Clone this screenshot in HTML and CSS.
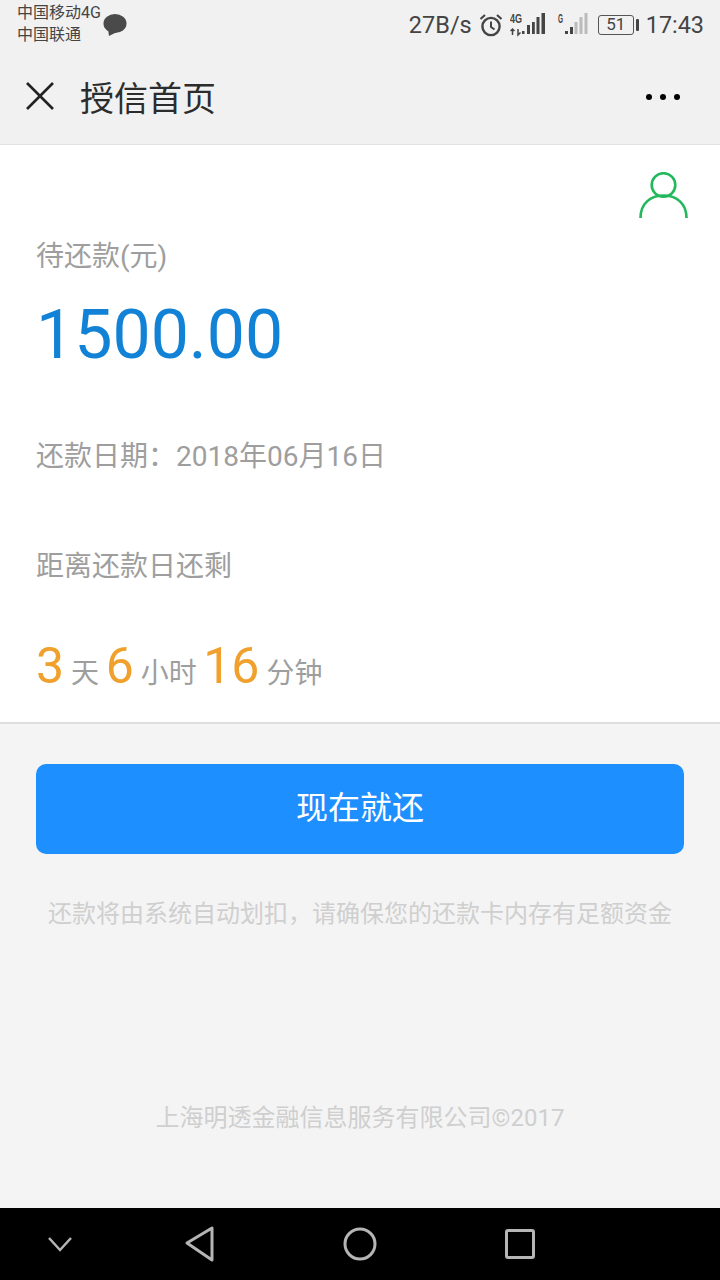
FILE: index.html
```html
<!DOCTYPE html>
<html lang="zh-CN">
<head>
<meta charset="utf-8">
<title>授信首页</title>
<link rel="stylesheet" href="styles.css">
</head>
<body>
<div class="phone">
  <div class="status">
    <div class="carriers">
      <div>中国移动4G</div>
      <div>中国联通</div>
    </div>
    <svg class="chat" width="26" height="24" viewBox="0 0 26 24"><ellipse cx="13" cy="10.5" rx="11.5" ry="9.5" fill="#4a4a4a"/><path d="M6 16 L7 23 L15 19Z" fill="#4a4a4a"/></svg>
    <div class="status-right">
      <span class="speed">27B/s</span>
      <svg width="24" height="24" viewBox="0 0 24 24" fill="none" stroke="#444" stroke-width="2.4"><circle cx="12" cy="13.500" r="8.600"/><path d="M12 8.500V14l3.500 2.500" stroke-width="2"/><path d="M1.500 6 L6 2M22.500 6 L18 2" stroke-width="2.200"/></svg>
      <svg class="sig1" width="36" height="24" viewBox="0 0 36 24"><text x="0" y="10" class="mini" textLength="12" lengthAdjust="spacingAndGlyphs">4G</text><path d="M2.500 16v6M0.500 18l2-2 2 2M8 16v6l2.500-2.500" stroke="#444" stroke-width="1.500" fill="none"/><g fill="#444"><rect x="12" y="18" width="2.500" height="3"/><rect x="17" y="12" width="3" height="9"/><rect x="22" y="9" width="2.800" height="12"/><rect x="26.500" y="4" width="3" height="17"/><rect x="31.500" y="0" width="3.500" height="21"/></g></svg>
      <svg class="sig2" width="32" height="24" viewBox="0 0 32 24"><text x="1" y="10" class="mini" textLength="5" lengthAdjust="spacingAndGlyphs">G</text><rect x="8" y="18" width="3" height="3" fill="#444"/><rect x="13" y="14" width="3" height="7" fill="#444"/><g fill="#bbb"><rect x="17.500" y="9" width="3" height="12"/><rect x="22.500" y="4" width="3" height="17"/><rect x="27.500" y="0" width="3" height="21"/></g></svg>
      <div class="battery"><span class="batt-body">51</span><span class="batt-tip"></span></div>
      <span class="clock">17:43</span>
    </div>
  </div>
  <header class="nav">
    <svg class="close" width="30" height="30" viewBox="0 0 30 30"><path d="M2 2 L28 28 M28 2 L2 28" stroke="#222" stroke-width="2.600" fill="none"/></svg>
    <h1 class="title">授信首页</h1>
    <div class="dots"><i></i><i></i><i></i></div>
  </header>
  <main class="main">
    <section class="card">
      <svg class="user" width="52" height="50" viewBox="0 0 52 50" fill="none" stroke="#22b85c" stroke-width="2.600"><circle cx="25.500" cy="13" r="11.800"/><path d="M2.500 46 C2.500 31 13 23.500 25.500 23.500 S48.500 31 48.500 46"/></svg>
      <div class="label owed">待还款(元)</div>
      <div class="amount">1500.00</div>
      <div class="label date">还款日期：2018年06月16日</div>
      <div class="label remain">距离还款日还剩</div>
      <div class="count"><b>3</b><span>天</span><b>6</b><span>小时</span><b>16</b><span>分钟</span></div>
    </section>
    <button class="pay">现在就还</button>
    <p class="tip">还款将由系统自动划扣，请确保您的还款卡内存有足额资金</p>
    <p class="copy">上海明透金融信息服务有限公司©2017</p>
  </main>
  <footer class="sysnav">
    <svg class="nav-down" width="26" height="18" viewBox="0 0 26 18" fill="none" stroke="#b5b5b5" stroke-width="2.500"><path d="M2 3 L13 15 L24 3"/></svg>
    <svg class="nav-back" width="30" height="36" viewBox="0 0 30 36" fill="none" stroke="#b5b5b5" stroke-width="3" stroke-linejoin="round"><path d="M27 2 V34 L2 17Z"/></svg>
    <svg class="nav-home" width="34" height="36" viewBox="0 0 34 36" fill="none" stroke="#b5b5b5" stroke-width="3"><circle cx="17" cy="18" r="15"/></svg>
    <svg class="nav-recent" width="30" height="30" viewBox="0 0 30 30" fill="none" stroke="#b5b5b5" stroke-width="3" stroke-linejoin="round"><rect x="1.500" y="1.500" width="27" height="27" rx="1.500"/></svg>
  </footer>
</div>
</body>
</html>
```
FILE: styles.css
```css
* { box-sizing: border-box; }
html, body { margin: 0; padding: 0; }
body { font-family: Roboto, "Noto Sans CJK SC", sans-serif; background: #f4f4f4; }
.phone { width: 720px; height: 1280px; display: flex; flex-direction: column; overflow: hidden; }

.status { height: 48px; flex: none; background: #f1f1f1; display: flex; align-items: flex-start; padding: 2px 16px 0 17px; color: #444; }
.carriers { font-size: 16px; line-height: 22px; }
.chat { margin: 11px 0 0 1px; }
.status-right { margin-left: auto; margin-top: 1px; display: flex; align-items: center; height: 44px; gap: 7px; }
.speed { font-size: 23.5px; color: #444; }
.clock { font-size: 23.4px; color: #444; }
.mini { font-size: 12px; font-weight: 700; fill: #444; font-family: "Liberation Sans", sans-serif; }
.sig2 { margin-left: 4px; }
.battery { display: flex; align-items: center; margin-left: 2px; }
.batt-body { width: 36px; height: 20px; border: 1.500px solid #555; border-radius: 3px; font-size: 17px; line-height: 17px; text-align: center; color: #444; }
.batt-tip { width: 3px; height: 12px; margin-left: 2px; background: #444; border-radius: 1px; }

.nav { height: 97px; flex: none; background: #f1f1f1; border-bottom: 1px solid #e2e2e2; display: flex; align-items: center; padding: 0 25px; }
.close { flex: none; }
.title { margin: 0 0 0 25px; font-size: 34px; font-weight: 400; color: #2c2c2c; letter-spacing: 0; }
.dots { margin: 1px 15px 0 auto; display: flex; gap: 8px; }
.dots i { width: 6px; height: 6px; border-radius: 50%; background: #000; display: block; }

.main { flex: 1; background: #f4f4f4; display: flex; flex-direction: column; min-height: 0; }
.card { position: relative; background: #fff; border-bottom: 2px solid #dedede; height: 579px; padding: 91px 36px 0; }
.user { position: absolute; top: 27px; right: 30px; }
.label { font-size: 28px; line-height: 42px; color: #9e9e9e; }
.amount { font-size: 68px; line-height: 84px; color: #1282d6; margin-top: 15px; }
.date { margin-top: 59px; }
.remain { margin-top: 68px; }
.count { display: flex; align-items: baseline; margin-top: 48px; color: #9e9e9e; font-size: 28px; line-height: 60px; }
.count b { font-weight: 400; font-size: 50px; color: #f0a02c; }
.count span { margin: 0 6.5px 0 7px; }

.pay { display: block; margin: 40px 36px 0; padding: 0 0 8px; width: 648px; height: 90px; flex: none; border: 0; border-radius: 10px; background: #1e8fff; color: #fff; font: 400 32px Roboto, "Noto Sans CJK SC", sans-serif; }
.tip { margin: 40px 0 0; text-align: center; font-size: 24px; line-height: 40px; color: #cfcfcf; }
.copy { margin: 164px 0 0; text-align: center; font-size: 24px; line-height: 40px; color: #cfcfcf; }

.sysnav { height: 72px; flex: none; background: #000; display: flex; align-items: center; padding: 0 0 0 47px; }
.nav-back { margin-left: 112px; }
.nav-home, .nav-recent { margin-left: 128px; }
```
